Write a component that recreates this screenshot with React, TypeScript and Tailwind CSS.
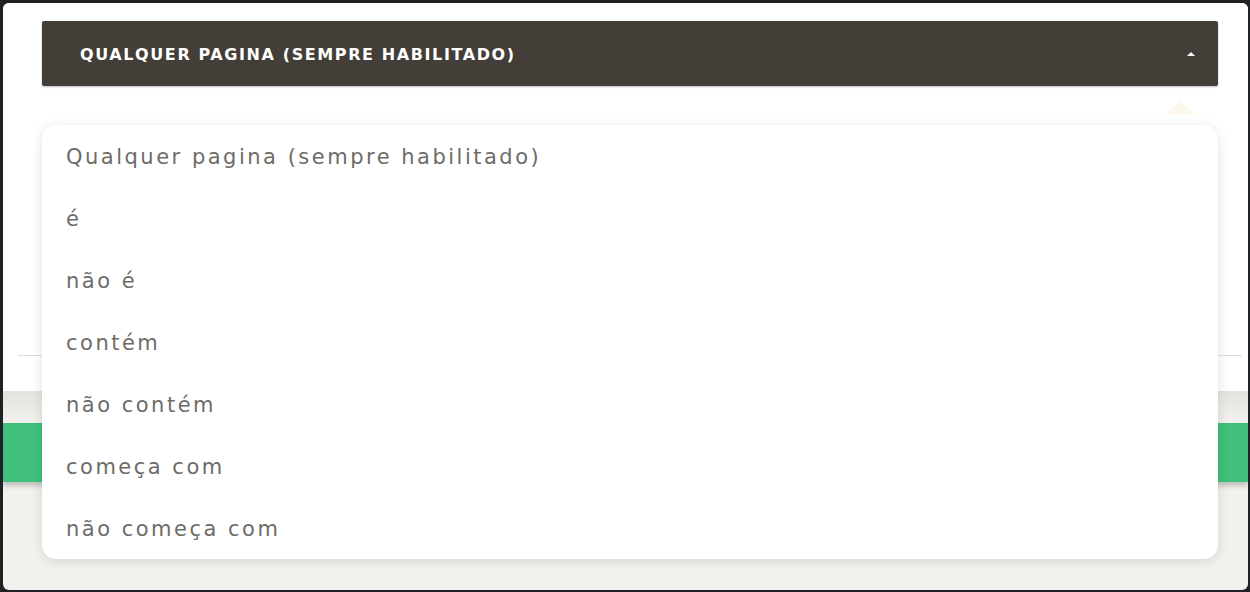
const options = [
  "Qualquer pagina (sempre habilitado)",
  "é",
  "não é",
  "contém",
  "não contém",
  "começa com",
  "não começa com",
];

export default function App() {
  return (
    <div className="h-[592px] w-[1250px] overflow-hidden bg-[#1f2224] pb-[2px] pl-[3px] pr-[2px] pt-[3px] font-['DejaVu_Sans',sans-serif]">
      <div className="relative flex h-full flex-col overflow-hidden rounded-[6px] bg-[#f2f1ee]">
        <div className="h-[388px] bg-white pl-[39px] pr-[30px] pt-[18px]">
          <button className="flex h-[65px] w-full items-center justify-between rounded-[2px] bg-[#433e38] pl-[38px] pr-[23px] shadow-[0_1px_2px_rgba(0,0,0,0.25)]">
            <span className="pt-[3px] text-[16px] font-bold tracking-[1.6px] text-white">
              QUALQUER PAGINA (SEMPRE HABILITADO)
            </span>
            <span className="h-0 w-0 border-x-[4px] border-b-[4px] border-x-transparent border-b-white" />
          </button>
          <div className="-ml-[24px] -mr-[24px] mt-[269px] h-px bg-[#dedcd9]" />
        </div>
        <div className="h-[32px] bg-gradient-to-b from-[#e4e2de] to-[#f2f1ee]" />
        <div className="h-[59px] bg-[#40c07a] shadow-[0_4px_5px_rgba(0,0,0,0.2)]" />

        <div className="absolute left-[39px] right-[30px] top-[97px]">
          <div className="absolute right-[23px] top-0 h-0 w-0 border-x-[15px] border-b-[15px] border-x-transparent border-b-[#fdf8ee]" />
          <ul className="mt-[25px] overflow-hidden rounded-[14px] bg-white shadow-[0_2px_12px_rgba(0,0,0,0.12)]">
            {options.map((option) => (
              <li
                key={option}
                className="flex h-[62px] items-center px-[24px] pt-[3px] text-[21px] tracking-[2.5px] text-[#6f6b66]"
              >
                {option}
              </li>
            ))}
          </ul>
        </div>
      </div>
    </div>
  );
}
